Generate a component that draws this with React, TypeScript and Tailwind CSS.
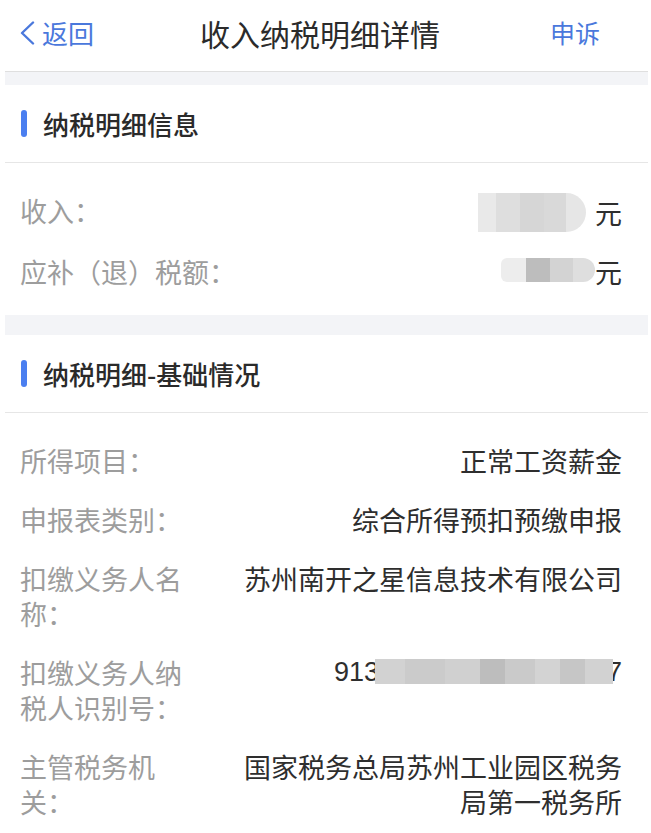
export default function App() {
  const font = { fontFamily: '"Noto Sans CJK SC", "Noto Sans", sans-serif' };

  return (
    <div className="w-[651px] min-h-[833px] bg-white pl-[5px] pr-[3px] text-[#333]" style={font}>
      {/* 顶部导航 */}
      <header className="flex items-center h-[72px] pb-[6px] border-b border-[#dfdfdf]">
        <div className="w-[180px] flex items-center pl-[14px] text-[#4a78dc]">
          <svg width="18" height="24" viewBox="0 0 18 24" className="mr-[5px]">
            <polyline points="14,1.5 3,12 14,22.5" fill="none" stroke="#4a78dc" strokeWidth="2.4" strokeLinecap="round" strokeLinejoin="round" />
          </svg>
          <span className="text-[26px] leading-none">返回</span>
        </div>
        <h1 className="ml-[15px] text-[30px] leading-none font-normal text-[#2b2b2b]">收入纳税明细详情</h1>
        <span className="ml-auto pr-[48px] text-[25px] leading-none text-[#4a78dc]">申诉</span>
      </header>

      <div className="h-[13px] bg-[#f3f4f7]" />

      {/* 纳税明细信息 */}
      <section>
        <SectionTitle title="纳税明细信息" />
        <div className="flex flex-col gap-[22px] pt-[30px] pb-[26px] pl-[15px] pr-[26px]">
          <Row label="收入：" wide>
            <div className="flex items-center justify-end">
              <div className="flex h-[39px] w-[108px] rounded-r-full overflow-hidden blur-[0.6px]">
                <span className="w-[18px] bg-[#e9e9e9]" />
                <span className="w-[24px] bg-[#dedede]" />
                <span className="w-[24px] bg-[#d6d6d6]" />
                <span className="w-[22px] bg-[#d9d9d9]" />
                <span className="flex-1 bg-[#e6e6e6]" />
              </div>
              <span className="ml-[9px]">元</span>
            </div>
          </Row>
          <Row label="应补（退）税额：" wide>
            <div className="flex items-center justify-end">
              <div className="flex h-[24px] w-[94px] rounded-l-md rounded-r-xl overflow-hidden blur-[0.6px] -mt-[4px]">
                <span className="w-[25px] bg-[#ededed]" />
                <span className="w-[24px] bg-[#bdbdbd]" />
                <span className="w-[23px] bg-[#d3d3d3]" />
                <span className="flex-1 bg-[#dedede]" />
              </div>
              <span>元</span>
            </div>
          </Row>
        </div>
      </section>

      <div className="h-[20px] bg-[#f3f4f7]" />

      {/* 纳税明细-基础情况 */}
      <section>
        <SectionTitle title="纳税明细-基础情况" />
        <div className="flex flex-col gap-[24px] pt-[30px] pb-[20px] pl-[15px] pr-[26px]">
          <Row label="所得项目：">正常工资薪金</Row>
          <Row label="申报表类别：">综合所得预扣预缴申报</Row>
          <Row label="扣缴义务人名称：">苏州南开之星信息技术有限公司</Row>
          <Row label="扣缴义务人纳税人识别号：">
            <div className="flex items-center justify-end">
              <span style={{ fontFamily: '"Liberation Sans", sans-serif' }}>913</span>
              <div className="relative z-10 flex h-[25px] w-[238px] -ml-[4px] overflow-hidden blur-[0.6px] -mt-[3px]">
                <span className="w-[30px] bg-[#d2d2d2]" />
                <span className="w-[40px] bg-[#cbcbcb]" />
                <span className="w-[35px] bg-[#d0d0d0]" />
                <span className="w-[25px] bg-[#bdbdbd]" />
                <span className="w-[30px] bg-[#cacaca]" />
                <span className="w-[25px] bg-[#d3d3d3]" />
                <span className="w-[25px] bg-[#c6c6c6]" />
                <span className="flex-1 bg-[#d2d2d2]" />
              </div>
              <span className="-ml-[6px]" style={{ fontFamily: '"Liberation Sans", sans-serif' }}>7</span>
            </div>
          </Row>
          <Row label="主管税务机关：">国家税务总局苏州工业园区税务局第一税务所</Row>
        </div>
      </section>
    </div>
  );
}

function SectionTitle({ title }: { title: string }) {
  return (
    <div className="flex items-center h-[78px] border-b border-[#e6e6e6] pl-[16px]">
      <span className="w-[6px] h-[27px] rounded-full bg-[#4b7ff0]" />
      <span className="ml-[16px] text-[26px] leading-none font-medium text-[#2a2a2a]">{title}</span>
    </div>
  );
}

function Row({ label, wide, children }: { label: string; wide?: boolean; children: React.ReactNode }) {
  return (
    <div className="flex items-start justify-between text-[27px] leading-[35px]">
      <div className={wide ? "shrink-0 whitespace-nowrap text-[#9d9d9d]" : "w-[175px] shrink-0 text-[#9d9d9d]"}>{label}</div>
      <div className={wide ? "flex-1 text-right text-[#2e2e2e]" : "w-[392px] text-right text-[#2e2e2e]"}>{children}</div>
    </div>
  );
}
